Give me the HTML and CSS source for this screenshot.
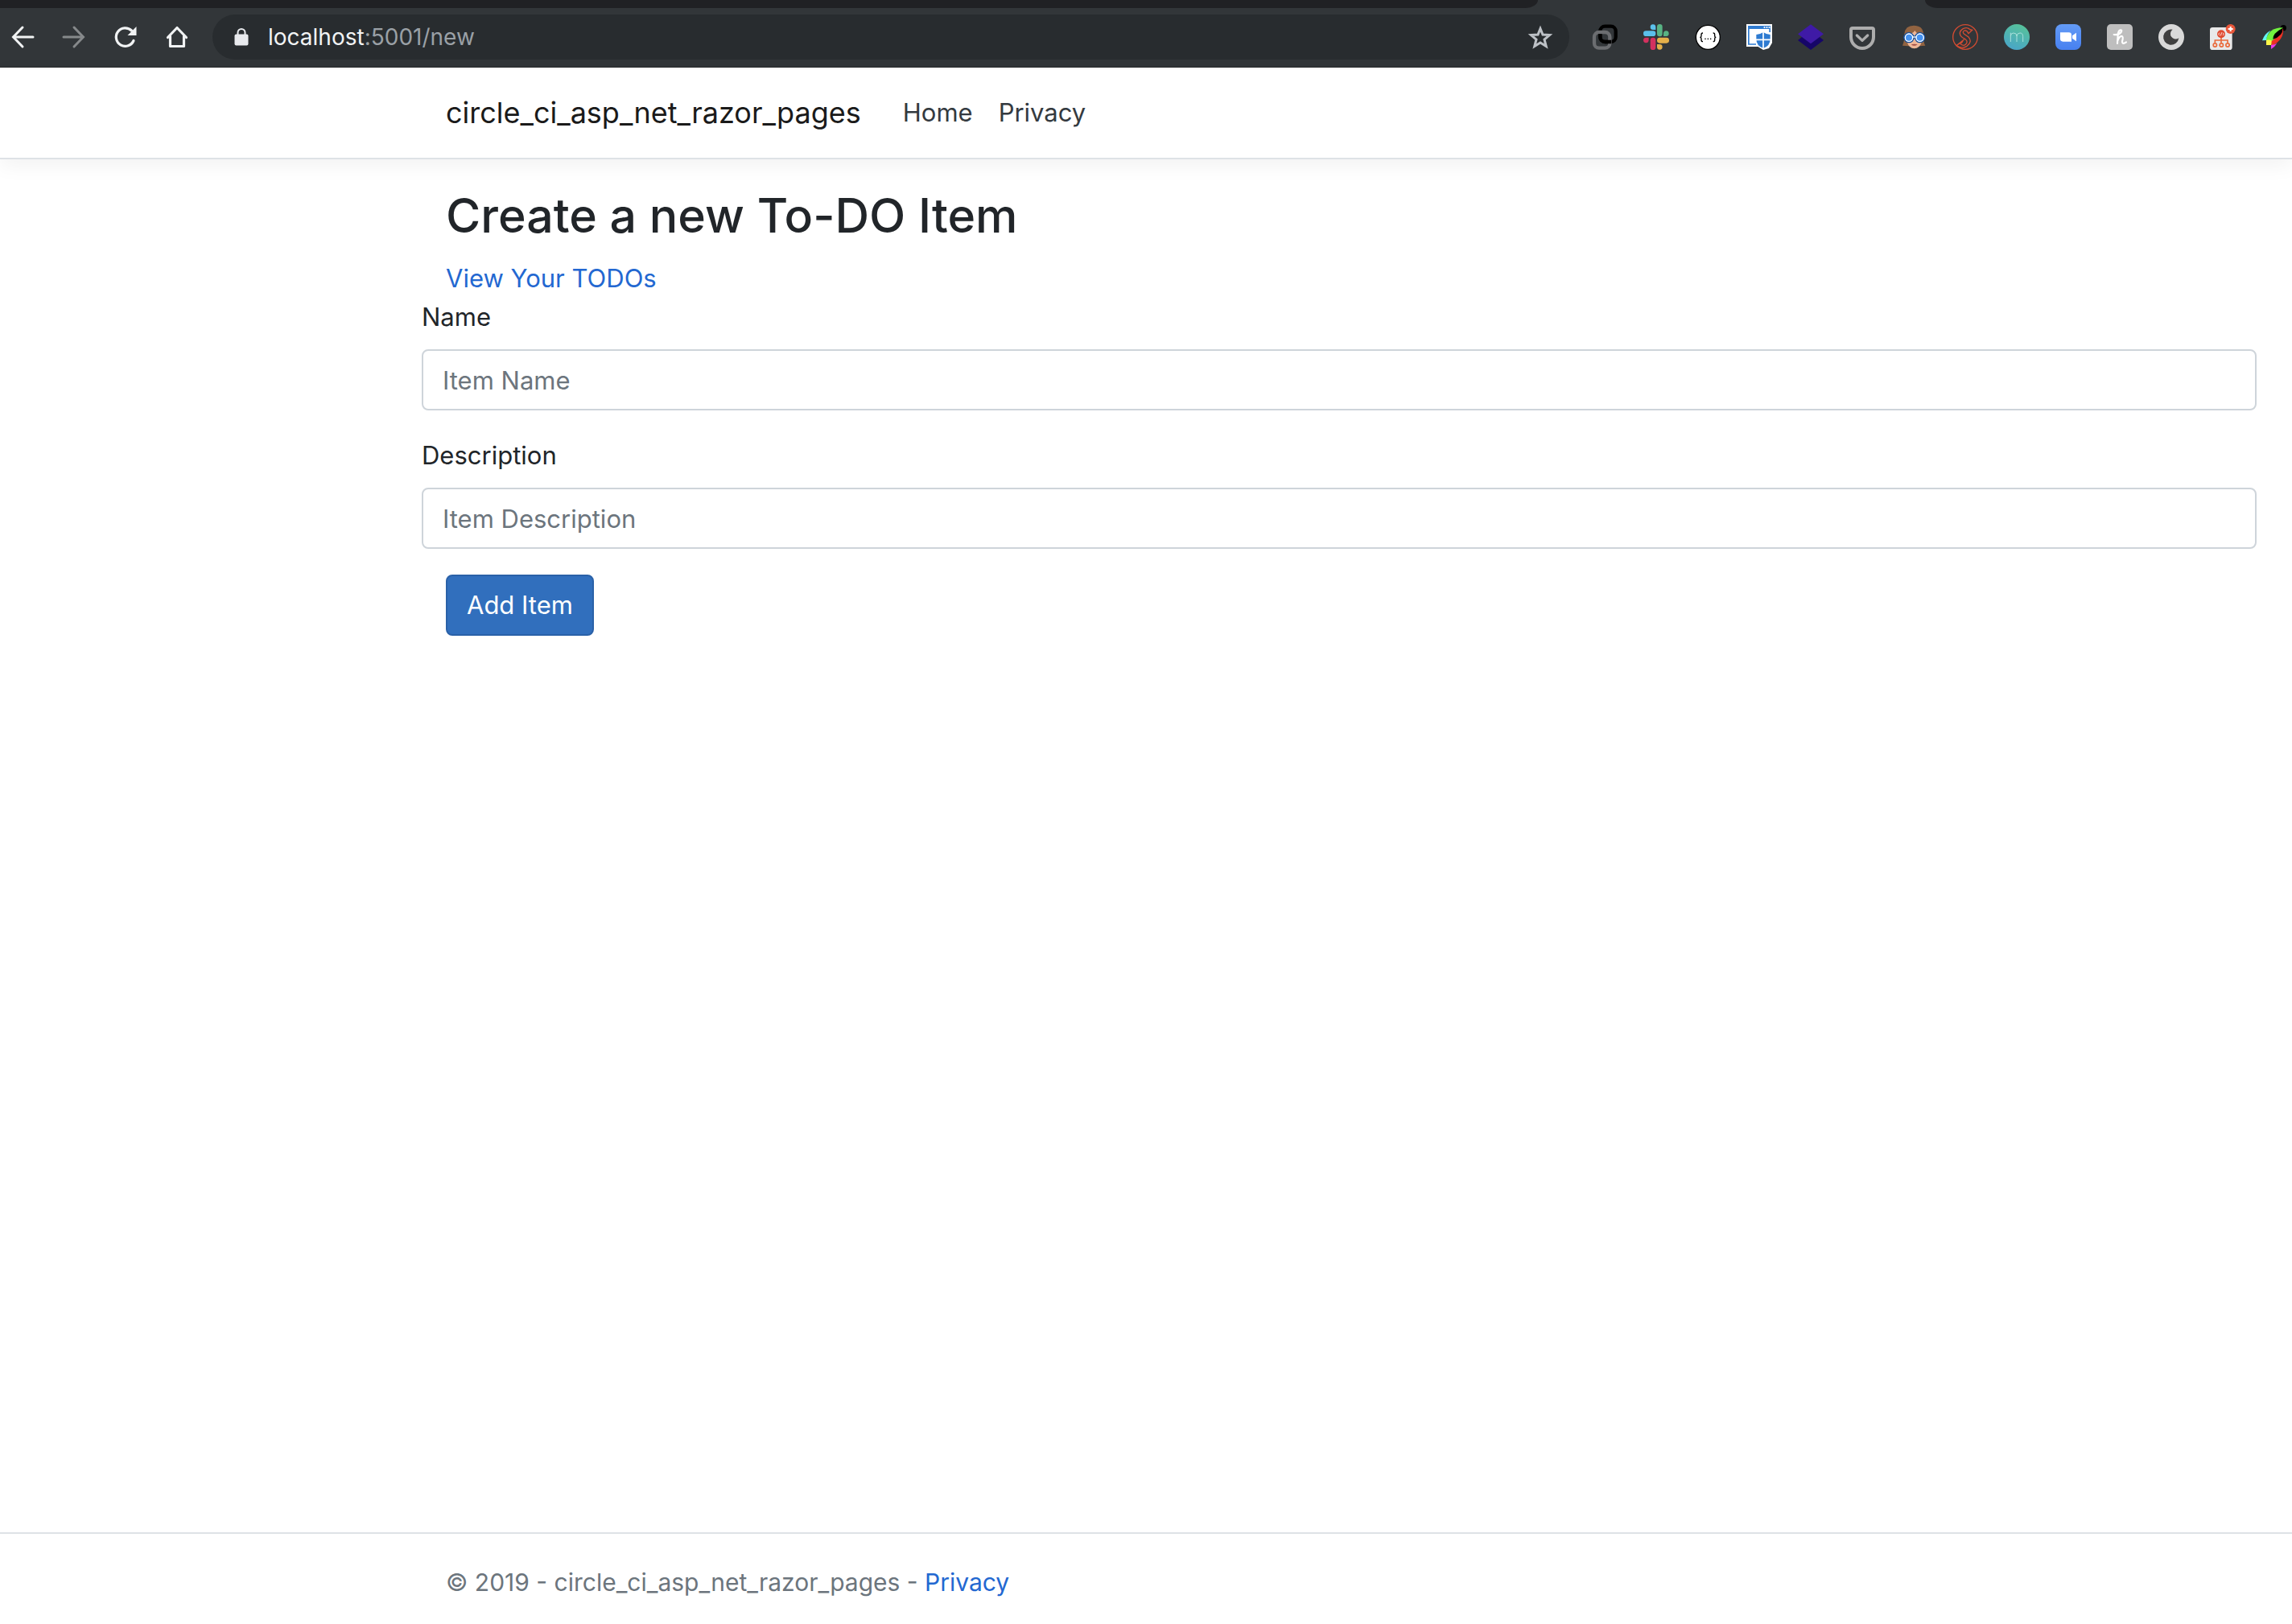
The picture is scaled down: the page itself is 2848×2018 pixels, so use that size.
FILE: index.html
```html
<!DOCTYPE html>
<html lang="en">
<head>
<meta charset="utf-8">
<title>Create a new To-DO Item - circle_ci_asp_net_razor_pages</title>
<link rel="stylesheet" href="styles.css">
</head>
<body>
<div class="browser">
  <div class="tabstrip"><span class="tabs-before"></span><span class="tabs-after"></span></div>
  <div class="toolbar">
    <div class="nav-buttons">
      <button type="button" class="icon-button" aria-label="Back"><svg viewBox="0 0 32 32" fill="none" stroke="#f1f3f4" stroke-width="3"><path d="M29 16H5M16 4L4.500 16L16 28" stroke-linecap="round"/></svg></button>
      <button type="button" class="icon-button" aria-label="Forward"><svg viewBox="0 0 32 32" fill="none" stroke="#86898b" stroke-width="3"><path d="M3 16H27M16 4L27.500 16L16 28" stroke-linecap="round"/></svg></button>
      <button type="button" class="icon-button" aria-label="Reload"><svg viewBox="0 0 32 32"><path d="M26 20.500A11.300 11.300 0 1 1 23.500 8" fill="none" stroke="#f1f3f4" stroke-width="3.200" stroke-linecap="round"/><path d="M29.500 3V14H18.500Z" fill="#f1f3f4"/></svg></button>
      <button type="button" class="icon-button" aria-label="Home"><svg viewBox="0 0 32 32" fill="none" stroke="#f1f3f4" stroke-width="3.200" stroke-linejoin="round" stroke-linecap="round"><path d="M4.500 16.500L16 4.500L27.500 16.500M7.500 15V27.500H24.500V15"/></svg></button>
    </div>
    <div class="omnibox">
      <svg class="lock" viewBox="0 0 18 22"><rect x="0.500" y="7.500" width="17" height="14" rx="2" fill="#e8eaed"/><path d="M4.500 9V5.500a4.500 4.500 0 0 1 9 0V9" fill="none" stroke="#e8eaed" stroke-width="2"/></svg>
      <div class="url" role="textbox" contenteditable="true" spellcheck="false" aria-label="Address"><span class="url-host">localhost</span>:5001/new</div>
      <button type="button" class="icon-button" aria-label="Bookmark this page"><svg viewBox="0 0 32 32" fill="none" stroke="#bdc1c6" stroke-width="3"><path d="M16 5.500L19 13L27.500 13.600L21 19L23.200 27.500L16 23L8.800 27.500L11 19L4.500 13.600L13 13Z"/></svg></button>
    </div>
    <div class="extensions">
      <button type="button" class="icon-button" aria-label="Links"><svg viewBox="0 0 96 96" fill="none" stroke-width="13"><rect x="31" y="8" width="58" height="58" rx="18" stroke="#000"/><rect x="9" y="30" width="58" height="59" rx="18" stroke="#6b6d70"/><path d="M31 36V48A18 18 0 0 0 49 66H72" stroke="#000"/></svg></button>
      <button type="button" class="icon-button" aria-label="Slack"><svg viewBox="0 0 96 96"><g fill="#5bc0eb"><path d="M46 21H36a10 10 0 1 1 10-11z"/><rect y="25" width="46" height="20" rx="10"/></g><g fill="#58b384"><rect x="51" width="20" height="46" rx="10"/><path d="M75 45V35a10 10 0 1 1 11 10z"/></g><g fill="#d3315f"><path d="M20 50V61a10 10 0 1 1-10-11z"/><rect x="26" y="50" width="20" height="46" rx="10"/></g><g fill="#e5b04a"><rect x="51" y="50" width="45" height="21" rx="10"/><path d="M51 75H61a10 10 0 1 1-10 11z"/></g></svg></button>
      <button type="button" class="icon-button" aria-label="JSON Viewer"><svg viewBox="0 0 96 96"><circle cx="49" cy="49" r="45" fill="#fff" stroke="#000" stroke-width="4"/><path d="M30 33q-6 0-6 6v5q0 5-5 5q5 0 5 5v5q0 6 6 6M68 33q6 0 6 6v5q0 5 5 5q-5 0-5 5v5q0 6-6 6" fill="none" stroke="#000" stroke-width="4"/><g fill="#000"><circle cx="39" cy="55" r="2.500"/><circle cx="49" cy="55" r="2.500"/><circle cx="59" cy="55" r="2.500"/></g></svg></button>
      <button type="button" class="icon-button" aria-label="Browser Protection"><svg viewBox="0 0 96 96"><path d="M0 0H96V70L84 90L63 96L44 84H0Z" fill="#fff"/><path d="M6 6H90V18H6Z" fill="#2e7bd1"/><path d="M65 9h5v6h-5zM74 9h5v6h-5zM83 9h5v6h-5z" fill="#fff"/><path d="M8.500 18V75H36" fill="none" stroke="#2e7bd1" stroke-width="5"/><path d="M87.500 18V30" stroke="#2e7bd1" stroke-width="5"/><path d="M63 26Q74 35 93 36V56Q93 82 63 94Q33 82 33 56V36Q52 35 63 26Z" fill="#fff"/><path d="M63 30Q74 38 89 39V56Q89 80 63 90Q37 80 37 56V39Q52 38 63 30Z" fill="#2e7bd1"/><path d="M63 30V90M36 58H90" stroke="#fff" stroke-width="5"/></svg></button>
      <button type="button" class="icon-button" aria-label="Layers"><svg viewBox="0 0 96 96"><path d="M48 22L96 60L48 96L0 60Z" fill="#160668"/><path d="M48 1L96 37L48 73L0 37Z" fill="#3f1aa6"/></svg></button>
      <button type="button" class="icon-button" aria-label="Pocket"><svg viewBox="0 0 96 96" fill="none" stroke="#adadad"><path d="M12 15H84Q90 15 90 21V48A42 42 0 0 1 6 48V21Q6 15 12 15Z" stroke-width="12"/><path d="M28 42L48 61L68 42" stroke-width="10" stroke-linecap="round" stroke-linejoin="round"/></svg></button>
      <button type="button" class="icon-button" aria-label="Goggles"><svg viewBox="0 0 96 96"><path d="M6 80Q14 62 13 36Q16 5 48 5Q82 5 84 36Q82 64 91 80L70 82H28Z" fill="#916341"/><path d="M22 38Q44 37 52 24Q60 38 78 40V66Q70 90 50 91Q30 90 23 66Z" fill="#edb697"/><path d="M38 76Q50 73 62 76Q50 85 38 76Z" fill="#a34c43"/><path d="M10 48H90" stroke="#164d96" stroke-width="10"/><g fill="#4592f1" stroke="#164d96" stroke-width="4"><circle cx="30" cy="50" r="18"/><circle cx="71" cy="50" r="18"/></g><g fill="none" stroke="#fff" stroke-width="4"><circle cx="30" cy="50" r="14"/><circle cx="71" cy="50" r="14"/><path d="M44 48H57"/></g></svg></button>
      <button type="button" class="icon-button" aria-label="Script"><svg viewBox="0 0 96 96" fill="none" stroke="#d34c32" stroke-width="4"><circle cx="48" cy="48" r="46"/><path d="M68 22Q57 9 40 17Q22 28 31 44Q36 50 48 56Q60 65 49 76Q39 84 27 71L15 80Q35 94 54 82Q75 66 61 49L43 36Q36 28 45 24Q54 22 60 35L74 22Q62 19 56 14M20 76L44 57M27 71Q36 72 39 62"/></svg></button>
      <button type="button" class="icon-button" aria-label="Momentum"><svg viewBox="0 0 96 96"><defs><linearGradient id="teal" x1="0.700" y1="0" x2="0.300" y2="1"><stop offset="0" stop-color="#57c29a"/><stop offset="1" stop-color="#49a5c8"/></linearGradient></defs><circle cx="48" cy="48" r="48" fill="url(#teal)"/><path d="M25 66V32M25 44Q26 33 36 33Q48 33 48 45V66M48 45Q49 33 60 33Q71 33 71 46V66" fill="none" stroke="#a9e0dc" stroke-width="3"/></svg></button>
      <button type="button" class="icon-button" aria-label="Zoom"><svg viewBox="0 0 96 96"><defs><linearGradient id="blue" x1="0" y1="0" x2="0" y2="1"><stop offset="0" stop-color="#639bf6"/><stop offset="1" stop-color="#4780f0"/></linearGradient></defs><rect width="96" height="96" rx="24" fill="url(#blue)"/><path d="M18 31H50Q60 31 60 41V65H28Q18 65 18 55ZM63 43L78 32V64L63 53Z" fill="#fff"/></svg></button>
      <button type="button" class="icon-button" aria-label="Honey"><svg viewBox="0 0 96 96"><rect width="96" height="96" rx="15" fill="#bebebe"/><path d="M26 39Q44 42 53 30Q58 21 50 22Q42 24 41 42L39 72M40 62Q48 43 56 45Q62 48 57 64Q57 78 72 67" fill="none" stroke="#fff" stroke-width="6.500" stroke-linecap="round" stroke-linejoin="round"/></svg></button>
      <button type="button" class="icon-button" aria-label="Night mode"><svg viewBox="0 0 96 96"><circle cx="48" cy="48" r="48" fill="#d9d9d9"/><path d="M53 20A29 29 0 1 0 76 52A17 17 0 1 1 53 20Z" fill="#404040"/></svg></button>
      <button type="button" class="icon-button" aria-label="Code tree"><svg viewBox="0 0 96 96"><rect y="12" width="83" height="84" rx="10" fill="#e9e9e9"/><g fill="none" stroke="#e96a3b" stroke-width="5"><path d="M42 48V70M19 70V60H66V70"/><circle cx="19" cy="78" r="6.500"/><circle cx="43" cy="78" r="6.500"/><circle cx="66" cy="78" r="6.500"/></g><circle cx="42" cy="37" r="15" fill="#df4a30"/><path d="M36 32L32 37L36 42M48 32L52 37L48 42M44 31L40 43" fill="none" stroke="#fff" stroke-width="2.500"/><circle cx="77" cy="18" r="18" fill="#e8573a"/><path d="M77 9V27M68 18H86" stroke="#fff" stroke-width="6"/></svg></button>
      <button type="button" class="icon-button" aria-label="Colour feather"><svg viewBox="0 0 96 96"><circle cx="82" cy="14" r="11" fill="#000"/><path d="M80 13Q30 12 18 55V78H36Z" fill="#72f33f"/><path d="M3 61Q11 35 35 23Q20 39 18 60Z" fill="#63f6f3"/><path d="M18 60Q28 56 40 62L36 78H18Z" fill="#fff749"/><path d="M81 14Q86 58 37 82L38 63Q60 50 81 14Z" fill="#ee3124"/><path d="M80 14Q80 45 43 56Q41 34 80 14Z" fill="#000"/><path d="M36 77Q48 78 58 71Q49 86 36 93Z" fill="#ea3bea"/></svg></button>
    </div>
  </div>
</div>

<header class="site-header">
  <nav class="navbar">
    <a class="brand" href="/">circle_ci_asp_net_razor_pages</a>
    <a class="nav-link" href="/">Home</a>
    <a class="nav-link" href="/privacy">Privacy</a>
  </nav>
</header>

<main class="content">
  <div class="intro">
    <h2 class="title">Create a new To-DO Item</h2>
    <a class="link" href="/todos">View Your TODOs</a>
  </div>
  <form class="item-form">
    <div class="form-group">
      <label for="name">Name</label>
      <input class="form-control" type="text" id="name" placeholder="Item Name">
    </div>
    <div class="form-group">
      <label for="description">Description</label>
      <input class="form-control" type="text" id="description" placeholder="Item Description">
    </div>
    <button class="submit" type="submit">Add Item</button>
  </form>
</main>

<footer class="site-footer">© 2019 - circle_ci_asp_net_razor_pages - <a class="link" href="/privacy">Privacy</a></footer>
</body>
</html>
```

FILE: styles.css
```css
* {
  box-sizing: border-box;
}

body {
  display: flex;
  flex-direction: column;
  min-height: 100vh;
  margin: 0;
  background: #fff;
  color: #212529;
  font-family: Inter, "Liberation Sans", sans-serif;
  font-size: 31px;
  line-height: 48px;
}

a {
  text-decoration: none;
}

/* Browser chrome */
.browser {
  background: #323639;
  border-bottom: 1px solid #27292b;
}

.tabstrip {
  display: flex;
  justify-content: space-between;
  height: 10px;
}

.tabs-before,
.tabs-after {
  background: #202124;
}

.tabs-before {
  width: 67.1%;
  border-bottom-right-radius: 16px 10px;
}

.tabs-after {
  width: 16%;
  border-bottom-left-radius: 16px 10px;
}

.toolbar {
  display: flex;
  align-items: center;
  gap: 28px;
  padding: 8px 6px 9px 12px;
}

.nav-buttons,
.extensions {
  display: flex;
  gap: 32px;
}

.icon-button {
  display: block;
  width: 32px;
  height: 32px;
  padding: 0;
  border: 0;
  background: none;
}

.icon-button svg {
  display: block;
  width: 100%;
  height: 100%;
}

.omnibox {
  display: flex;
  flex: 1;
  align-items: center;
  gap: 24px;
  height: 56px;
  padding: 0 20px 0 27px;
  border-radius: 28px;
  background: #282c2f;
}

.lock {
  width: 18px;
  height: 22px;
}

.url {
  flex: 1;
  color: #9aa0a6;
  font-size: 28px;
}

.url-host {
  color: #f1f3f4;
}

/* Site header */
.site-header {
  border-bottom: 2px solid #dee2e6;
  box-shadow: 0 8px 24px rgba(0, 0, 0, 0.05);
}

.navbar {
  display: flex;
  align-items: center;
  gap: 32px;
  height: 112px;
  padding: 0 44px 0 554px;
}

.brand {
  margin-right: 20px;
  color: #1a1a1a;
  font-size: 36px;
}

.nav-link {
  color: #343a40;
}

/* Form page */
.content {
  flex: 1;
  padding: 32px 44px 32px 524px;
}

.intro {
  padding-left: 30px;
}

.title {
  margin: 0 0 16px;
  font-size: 59px;
  font-weight: 500;
  line-height: 76px;
}

.link {
  color: #2368d1;
}

.form-group {
  display: flex;
  flex-direction: column;
  gap: 16px;
  margin-bottom: 32px;
}

.form-control {
  width: 100%;
  height: 76px;
  padding: 0 24px;
  border: 2px solid #ced4da;
  border-radius: 8px;
  background: #fff;
  color: #495057;
  font: inherit;
}

.form-control::placeholder {
  color: #6c757d;
  opacity: 1;
}

.submit {
  height: 76px;
  margin-left: 30px;
  padding: 0 24px;
  border: 2px solid #2a61a8;
  border-radius: 8px;
  background: #316fbd;
  color: #fff;
  font: inherit;
}

/* Site footer */
.site-footer {
  padding: 36px 44px 28px 554px;
  border-top: 2px solid #dee2e6;
  color: #6c757d;
  font-size: 30px;
}
```
